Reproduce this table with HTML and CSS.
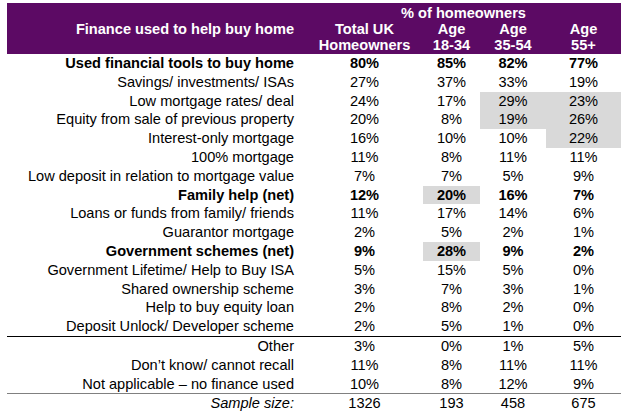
FILE: index.html
```html
<!DOCTYPE html>
<html>
<head>
<meta charset="utf-8">
<link rel="stylesheet" href="styles.css">
</head>
<body>
<div class="sheet">
<table class="grid">
<colgroup><col class="c-label"><col class="c-total"><col class="c-a1"><col class="c-a2"><col class="c-a3"></colgroup>
<thead>
<tr class="h1"><th></th><th colspan="4">% of homeowners</th></tr>
<tr class="h2"><th class="lab">Finance used to help buy home</th><th>Total UK<br>Homeowners</th><th>Age<br>18-34</th><th>Age<br>35-54</th><th>Age<br>55+</th></tr>
</thead>
<tbody>
<tr class="b"><td class="lab">Used financial tools to buy home</td><td>80%</td><td>85%</td><td>82%</td><td>77%</td></tr>
<tr><td class="lab">Savings/ investments/ ISAs</td><td>27%</td><td>37%</td><td>33%</td><td>19%</td></tr>
<tr><td class="lab">Low mortgage rates/ deal</td><td>24%</td><td>17%</td><td class="hl">29%</td><td class="hl">23%</td></tr>
<tr><td class="lab">Equity from sale of previous property</td><td>20%</td><td>8%</td><td class="hl">19%</td><td class="hl">26%</td></tr>
<tr><td class="lab">Interest-only mortgage</td><td>16%</td><td>10%</td><td>10%</td><td class="hl">22%</td></tr>
<tr><td class="lab">100% mortgage</td><td>11%</td><td>8%</td><td>11%</td><td>11%</td></tr>
<tr><td class="lab">Low deposit in relation to mortgage value</td><td>7%</td><td>7%</td><td>5%</td><td>9%</td></tr>
<tr class="b"><td class="lab">Family help (net)</td><td>12%</td><td class="hl">20%</td><td>16%</td><td>7%</td></tr>
<tr><td class="lab">Loans or funds from family/ friends</td><td>11%</td><td>17%</td><td>14%</td><td>6%</td></tr>
<tr><td class="lab">Guarantor mortgage</td><td>2%</td><td>5%</td><td>2%</td><td>1%</td></tr>
<tr class="b"><td class="lab">Government schemes (net)</td><td>9%</td><td class="hl">28%</td><td>9%</td><td>2%</td></tr>
<tr><td class="lab">Government Lifetime/ Help to Buy ISA</td><td>5%</td><td>15%</td><td>5%</td><td>0%</td></tr>
<tr><td class="lab">Shared ownership scheme</td><td>3%</td><td>7%</td><td>3%</td><td>1%</td></tr>
<tr><td class="lab">Help to buy equity loan</td><td>2%</td><td>8%</td><td>2%</td><td>0%</td></tr>
<tr class="end"><td class="lab">Deposit Unlock/ Developer scheme</td><td>2%</td><td>5%</td><td>1%</td><td>0%</td></tr>
<tr><td class="lab">Other</td><td>3%</td><td>0%</td><td>1%</td><td>5%</td></tr>
<tr><td class="lab">Don’t know/ cannot recall</td><td>11%</td><td>8%</td><td>11%</td><td>11%</td></tr>
<tr class="pre"><td class="lab">Not applicable – no finance used</td><td>10%</td><td>8%</td><td>12%</td><td>9%</td></tr>
<tr class="sample"><td class="lab"><em>Sample size:</em></td><td>1326</td><td>193</td><td>458</td><td>675</td></tr>
</tbody>
</table>
</div>
</body>
</html>
```
FILE: styles.css
```css
html, body { margin: 0; padding: 0; background: #fff; }
.sheet { padding: 3px 0 0 7px; font-family: "Liberation Sans", Arial, sans-serif; font-size: 14.6px; color: #000; }
.grid { border-collapse: collapse; table-layout: fixed; width: 614px; }
.c-label { width: 299px; }
.c-total { width: 117px; }
.c-a1 { width: 57px; }
.c-a2 { width: 66px; }
.c-a3 { width: 75px; }
thead tr { background: #5c0a64; color: #fff; }
thead th { font-weight: bold; text-align: center; padding: 0; line-height: 16px; vertical-align: top; white-space: nowrap; }
.h1 th { padding-top: 2px; }
.h2 th { padding-bottom: 1px; }
th.lab, td.lab { text-align: right; padding-right: 12px; }
tbody td { padding: 0; height: 18.8px; line-height: 18.8px; text-align: center; white-space: nowrap; }
.b td { font-weight: bold; }
.hl { background: #d9d9d9; }
.end td { border-bottom: 1.5px solid #000; }
.pre td { border-bottom: 1px solid #808080; }
.sample em { font-style: italic; }
```
